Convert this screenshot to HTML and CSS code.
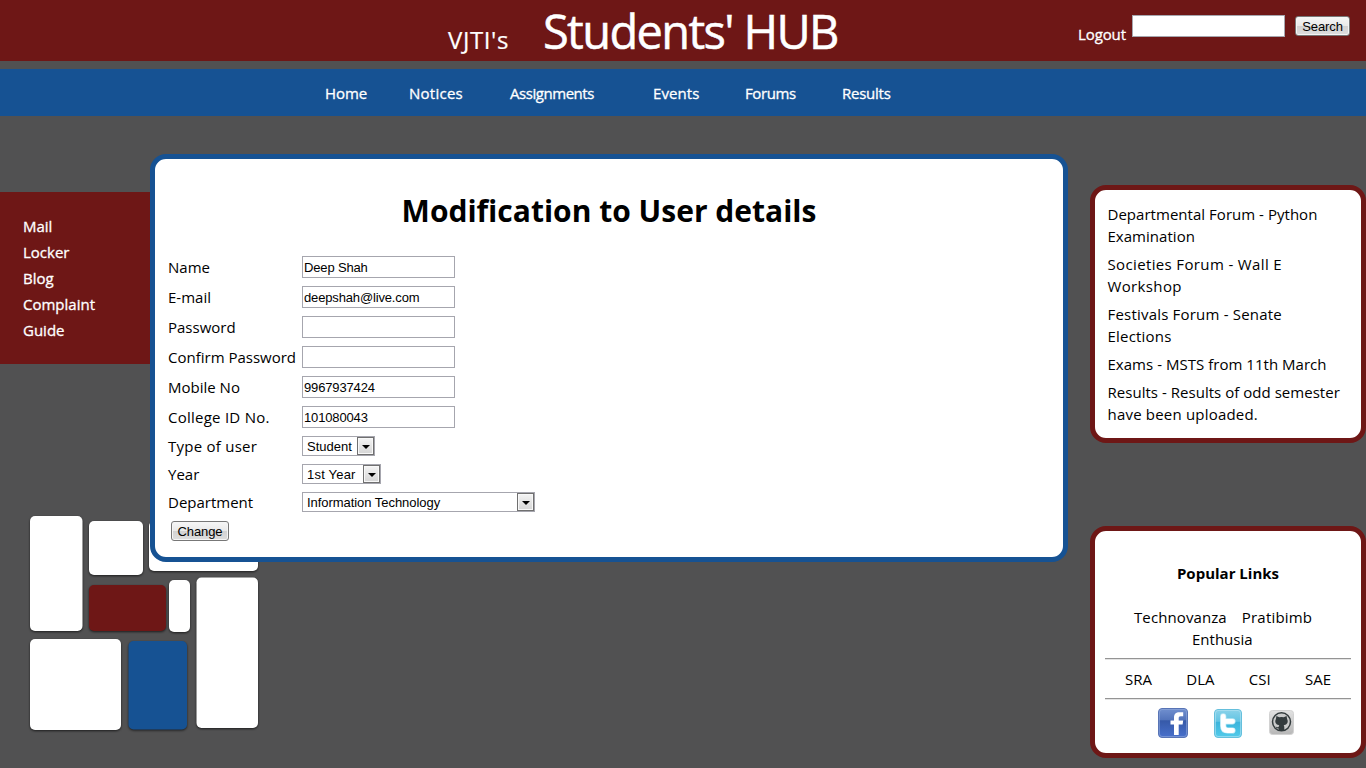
FILE: index.html
```html
<!DOCTYPE html>
<html lang="en">
<head>
<meta charset="utf-8">
<title>Students' HUB</title>
<link rel="stylesheet" href="styles.css">
</head>
<body>
<header class="header">
  <div class="brand"><span class="brand-small">VJTI's</span><span class="brand-big">Students' HUB</span></div>
  <form class="search">
    <a class="logout">Logout</a>
    <input class="field" type="text" aria-label="Search">
    <button class="button search-button" type="button">Search</button>
  </form>
</header>
<nav class="nav">
  <a class="n-home">Home</a><a class="n-notices">Notices</a><a class="n-assign">Assignments</a><a class="n-events">Events</a><a class="n-forums">Forums</a><a class="n-results">Results</a>
</nav>
<div class="page">
  <aside class="left">
    <ul class="side-menu"><li>Mail</li><li>Locker</li><li>Blog</li><li>Complaint</li><li>Guide</li></ul>
    <svg class="logo" width="240" height="226" viewBox="0 0 240 226">
      <g class="tiles" fill="#fff">
        <rect x="10" y="6" width="52.500" height="115" rx="5"/>
        <rect x="69" y="11" width="54" height="54" rx="5"/>
        <rect x="129" y="11" width="109" height="50" rx="5"/>
        <rect x="69" y="75" width="77" height="46" rx="5" fill="#6e1716"/>
        <rect x="149" y="70" width="21" height="52" rx="5"/>
        <rect x="176.500" y="67.500" width="61.500" height="150.500" rx="5"/>
        <rect x="10" y="129" width="91" height="91" rx="5"/>
        <rect x="108.500" y="131" width="58.500" height="88.500" rx="5" fill="#165293"/>
      </g>
    </svg>
  </aside>
  <main class="panel main">
    <h1>Modification to User details</h1>
    <form class="form">
      <label>Name</label><input class="field" type="text" value="Deep Shah">
      <label>E-mail</label><input class="field" type="text" value="deepshah@live.com">
      <label>Password</label><input class="field" type="password">
      <label>Confirm Password</label><input class="field" type="password">
      <label>Mobile No</label><input class="field" type="text" value="9967937424">
      <label class="l-wide">College ID No.</label><input class="field" type="text" value="101080043">
      <label class="short l-wide">Type of user</label><div class="select s-type"><span>Student</span><i></i></div>
      <label class="short">Year</label><div class="select s-year"><span>1st Year</span><i></i></div>
      <label class="short">Department</label><div class="select s-dept"><span>Information Technology</span><i></i></div>
      <button class="button change" type="button">Change</button>
    </form>
  </main>
  <aside class="right">
    <section class="panel news">
      <p>Departmental Forum - Python<br>Examination</p>
      <p class="wide">Societies Forum - Wall E<br>Workshop</p>
      <p class="mid">Festivals Forum - Senate<br>Elections</p>
      <p>Exams - MSTS from 11th March</p>
      <p>Results - Results of odd semester<br><span class="mid">have been uploaded.</span></p>
    </section>
    <section class="panel links">
      <h4>Popular Links</h4>
      <div class="line events"><a>Technovanza</a><a class="mid">Pratibimb</a></div>
      <div class="line enthusia"><a>Enthusia</a></div>
      <hr>
      <div class="line clubs"><a>SRA</a><a>DLA</a><a>CSI</a><a>SAE</a></div>
      <hr>
      <div class="social">
        <svg width="30" height="30" viewBox="0 0 30 30">
          <defs><linearGradient id="fb" x2="0" y2="1"><stop offset="0" stop-color="#7190cf"/><stop offset=".4" stop-color="#5273bb"/><stop offset=".42" stop-color="#3659a8"/><stop offset="1" stop-color="#4870cc"/></linearGradient></defs>
          <rect x=".5" y=".5" width="29" height="29" rx="3.500" fill="url(#fb)" stroke="#5874b5"/>
          <rect x="1.500" y="1.500" width="27" height="27" rx="2.500" fill="none" stroke="#8fa8dc" stroke-opacity=".6"/>
          <path d="M16 27V16.500h-3.500V12.500H16V9.500c0-3.600 2-5.300 5.300-5.300h3.900v4h-2.500c-1.600 0-2 .7-2 2v2.300h4.500l-.6 4h-3.900V27z" fill="#fff"/>
        </svg>
        <svg width="28" height="29" viewBox="0 0 28 29">
          <defs><linearGradient id="tw" x2="0" y2="1"><stop offset="0" stop-color="#8bd3ea"/><stop offset=".42" stop-color="#62c4e3"/><stop offset=".46" stop-color="#3bb4dc"/><stop offset="1" stop-color="#52cbea"/></linearGradient></defs>
          <rect x=".5" y=".5" width="27" height="28" rx="3.500" fill="url(#tw)" stroke="#65bfdc"/>
          <rect x="1.500" y="1.500" width="25" height="26" rx="2.500" fill="none" stroke="#b5e5f3" stroke-opacity=".6"/>
          <path d="M9.200 7.300v9.700q0 4.500 4.500 4.500H18.500M10 12.300h8.500" fill="none" stroke="#bfe9f5" stroke-width="6.200" stroke-linecap="round" stroke-linejoin="round"/>
          <path d="M9.200 7.300v9.700q0 4.500 4.500 4.500H18.500M10 12.300h8.500" fill="none" stroke="#fff" stroke-width="4.800" stroke-linecap="round" stroke-linejoin="round"/>
        </svg>
        <svg class="github" width="25" height="25" viewBox="0 0 25 25">
          <defs><linearGradient id="gh" x2="0" y2="1"><stop offset="0" stop-color="#e2e2e2"/><stop offset="1" stop-color="#b7b7b7"/></linearGradient></defs>
          <rect x=".5" y=".5" width="24" height="24" rx="3" fill="url(#gh)" stroke="#d2d2d2"/>
          <circle cx="12.500" cy="11.800" r="9" fill="#c9caca" stroke="#333b3d" stroke-width="1.500"/>
          <path d="M7.400 5.900 10.300 7.200q2.200-.5 4.400 0l2.900-1.300.5 3q1.200 1.800.3 4-.9 2-3.700 2.400.6.800.6 2v3.200H9.700v-2.100q-2.400.3-3.200-1.900 1.600 1 3.200.6 0-1.200.6-1.800-2.900-.4-3.700-2.400-.9-2.200.3-4z" fill="#333b3d"/>
        </svg>
      </div>
    </section>
  </aside>
</div>
</body>
</html>
```
FILE: styles.css
```css
* { box-sizing: border-box; }
body { margin: 0; height: 768px; overflow: hidden; background: #515152; color: #000; font: 15px/22px "Open Sans", sans-serif; }
h1, h4, p, ul { margin: 0; padding: 0; }
.header { height: 61px; background: #6e1716; color: #fff; display: flex; justify-content: space-between; }
.brand { padding-left: 448px; display: flex; align-items: baseline; line-height: 62px; white-space: nowrap; }
.brand-small { width: 95px; font-size: 24px; letter-spacing: 0.6px; -webkit-text-stroke: 0.2px; }
.brand-big { font-size: 47px; letter-spacing: -1.65px; -webkit-text-stroke: 0.5px; }
.search { display: flex; align-items: flex-start; padding: 15px 16px 0 0; }
.logout { width: 55px; padding: 8px 0 0 1px; letter-spacing: -0.1px; }
.logout, .nav, .side-menu { -webkit-text-stroke: 0.3px; }
.field { width: 153px; height: 22px; padding: 1px; border: 1px solid #a6a6ae; border-radius: 0; background: #fff; color: #000; font: 13px "Liberation Sans", Arial, sans-serif; letter-spacing: -0.15px; }
.button { height: 20px; padding: 0; border: 1px solid #777; border-radius: 3px; background: linear-gradient(#f6f6f6, #e9e9e9 50%, #d2d2d2 51%, #dedede); box-shadow: inset 0 0 0 1px #f5f5f5; color: #000; font: 13px/17px "Liberation Sans", Arial, sans-serif; letter-spacing: -0.1px; }
.search-button { width: 55px; margin: 1px 0 0 10px; }
.nav { height: 47px; margin-top: 8px; padding-left: 325px; background: #165293; color: #fff; display: flex; line-height: 49px; white-space: nowrap; }
.n-home { width: 84px; letter-spacing: -0.1px; }
.n-notices { width: 101px; letter-spacing: 0.25px; }
.n-assign { width: 143px; letter-spacing: -0.45px; }
.n-events { width: 92px; letter-spacing: 0.1px; }
.n-forums { width: 97px; letter-spacing: -0.4px; }
.n-results { letter-spacing: -0.25px; }
.page { display: grid; grid-template-columns: 150px 918px 298px; }
.left { padding-top: 76px; }
.side-menu { height: 172px; padding: 21px 0 0 23px; background: #6e1716; color: #fff; list-style: none; line-height: 26px; }
.logo { display: block; margin: 146px 0 0 20px; }
.tiles { filter: drop-shadow(0.5px 1px 0.8px rgba(0, 0, 0, .65)); }
.panel { background: #fff; border: 5px solid #6e1716; border-radius: 16px; }
.main { position: relative; z-index: 1; height: 408px; margin-top: 38px; border-color: #165293; }
h1 { padding-top: 33px; text-align: center; font-size: 30px; line-height: 38px; white-space: nowrap; }
.form { margin: 22px 0 0 13px; display: grid; grid-template-columns: 134px 300px; align-content: start; }
.form label { height: 30px; line-height: 30px; white-space: nowrap; }
.form .l-wide { letter-spacing: 0.25px; }
.form .field { margin-top: 4px; }
.form .short { height: 28px; line-height: 28px; }
.select { height: 20px; margin-top: 4px; padding: 0 1px 0 4px; border: 1px solid #a6a6ae; display: flex; align-items: center; justify-content: space-between; font: 13px/19px "Liberation Sans", Arial, sans-serif; }
.s-type { width: 73px; }
.s-year { width: 79px; letter-spacing: 0.2px; }
.s-dept { width: 233px; letter-spacing: -0.05px; }
.select i { width: 17px; height: 18px; border: 1px solid #707070; box-shadow: inset 0 0 0 1px #f8f8f8; background: linear-gradient(#f4f4f4, #d5d5d5); display: flex; align-items: center; justify-content: center; margin-right: -1px; }
.select i::after { content: ""; margin-top: 2px; border: 4px solid transparent; border-top-color: #000; border-bottom: 0; }
.change { width: 58px; margin: 5px 0 0 3px; }
.right { padding: 69px 0 0 22px; }
.news { height: 258px; padding: 13px 0 0 12.500px; white-space: nowrap; letter-spacing: 0.03px; }
.news p { margin-bottom: 6px; }
.wide { letter-spacing: 0.36px; }
.mid { letter-spacing: 0.2px; }
.links { height: 232px; margin-top: 83px; padding: 31px 10px 0; }
h4 { font-size: 15px; text-align: center; }
.line { display: flex; white-space: nowrap; }
.events { margin-top: 22px; padding-left: 29px; gap: 15px; letter-spacing: 0.1px; }
.enthusia { padding-left: 87px; }
hr { height: 2px; margin: 8px 0; border: 0; border-top: 1px solid #949494; border-bottom: 1px solid #e4e4e4; }
.clubs { justify-content: space-between; height: 22px; padding: 0 20px; }
.social { display: flex; align-items: center; padding-left: 53px; gap: 26px; }
.github { margin: -2px 0 0 1px; }
```
